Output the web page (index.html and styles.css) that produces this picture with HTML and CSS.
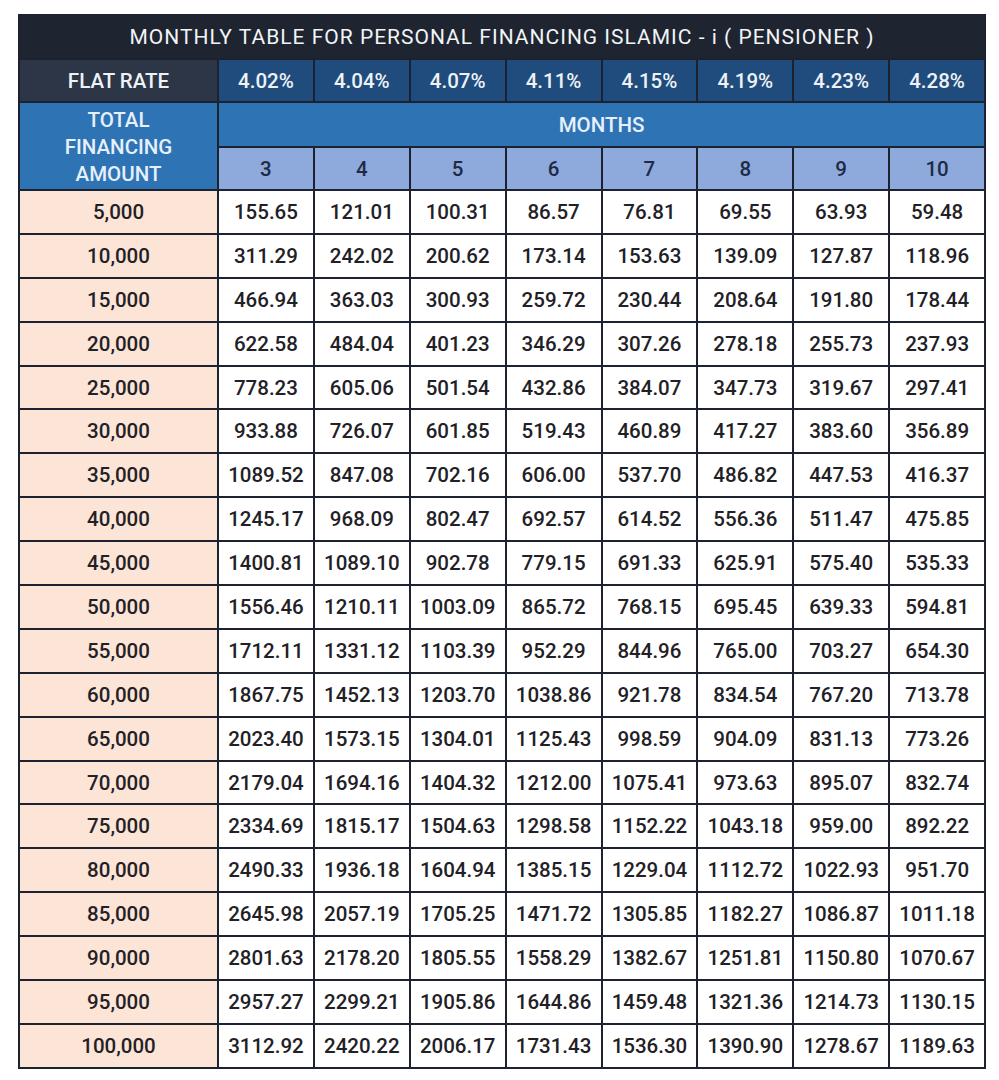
FILE: index.html
```html
<!DOCTYPE html>
<html>
<head>
<meta charset="utf-8">
<link rel="stylesheet" href="styles.css">
</head>
<body>
<table class="rates">
  <colgroup>
    <col class="c-amt">
    <col class="c-m"><col class="c-m"><col class="c-m"><col class="c-m">
    <col class="c-m"><col class="c-m"><col class="c-m"><col class="c-m">
  </colgroup>
  <thead>
    <tr class="r-title"><th colspan="9">MONTHLY TABLE FOR PERSONAL FINANCING ISLAMIC - i ( PENSIONER )</th></tr>
    <tr class="r-rate">
      <th class="lbl">FLAT RATE</th>
      <th>4.02%</th><th>4.04%</th><th>4.07%</th><th>4.11%</th><th>4.15%</th><th>4.19%</th><th>4.23%</th><th>4.28%</th>
    </tr>
    <tr class="r-months">
      <th class="amt-head" rowspan="2">TOTAL<br>FINANCING<br>AMOUNT</th>
      <th colspan="8">MONTHS</th>
    </tr>
    <tr class="r-num">
      <th>3</th><th>4</th><th>5</th><th>6</th><th>7</th><th>8</th><th>9</th><th>10</th>
    </tr>
  </thead>
  <tbody>
    <tr><th>5,000</th><td>155.65</td><td>121.01</td><td>100.31</td><td>86.57</td><td>76.81</td><td>69.55</td><td>63.93</td><td>59.48</td></tr>
    <tr><th>10,000</th><td>311.29</td><td>242.02</td><td>200.62</td><td>173.14</td><td>153.63</td><td>139.09</td><td>127.87</td><td>118.96</td></tr>
    <tr><th>15,000</th><td>466.94</td><td>363.03</td><td>300.93</td><td>259.72</td><td>230.44</td><td>208.64</td><td>191.80</td><td>178.44</td></tr>
    <tr><th>20,000</th><td>622.58</td><td>484.04</td><td>401.23</td><td>346.29</td><td>307.26</td><td>278.18</td><td>255.73</td><td>237.93</td></tr>
    <tr><th>25,000</th><td>778.23</td><td>605.06</td><td>501.54</td><td>432.86</td><td>384.07</td><td>347.73</td><td>319.67</td><td>297.41</td></tr>
    <tr><th>30,000</th><td>933.88</td><td>726.07</td><td>601.85</td><td>519.43</td><td>460.89</td><td>417.27</td><td>383.60</td><td>356.89</td></tr>
    <tr><th>35,000</th><td>1089.52</td><td>847.08</td><td>702.16</td><td>606.00</td><td>537.70</td><td>486.82</td><td>447.53</td><td>416.37</td></tr>
    <tr><th>40,000</th><td>1245.17</td><td>968.09</td><td>802.47</td><td>692.57</td><td>614.52</td><td>556.36</td><td>511.47</td><td>475.85</td></tr>
    <tr><th>45,000</th><td>1400.81</td><td>1089.10</td><td>902.78</td><td>779.15</td><td>691.33</td><td>625.91</td><td>575.40</td><td>535.33</td></tr>
    <tr><th>50,000</th><td>1556.46</td><td>1210.11</td><td>1003.09</td><td>865.72</td><td>768.15</td><td>695.45</td><td>639.33</td><td>594.81</td></tr>
    <tr><th>55,000</th><td>1712.11</td><td>1331.12</td><td>1103.39</td><td>952.29</td><td>844.96</td><td>765.00</td><td>703.27</td><td>654.30</td></tr>
    <tr><th>60,000</th><td>1867.75</td><td>1452.13</td><td>1203.70</td><td>1038.86</td><td>921.78</td><td>834.54</td><td>767.20</td><td>713.78</td></tr>
    <tr><th>65,000</th><td>2023.40</td><td>1573.15</td><td>1304.01</td><td>1125.43</td><td>998.59</td><td>904.09</td><td>831.13</td><td>773.26</td></tr>
    <tr><th>70,000</th><td>2179.04</td><td>1694.16</td><td>1404.32</td><td>1212.00</td><td>1075.41</td><td>973.63</td><td>895.07</td><td>832.74</td></tr>
    <tr><th>75,000</th><td>2334.69</td><td>1815.17</td><td>1504.63</td><td>1298.58</td><td>1152.22</td><td>1043.18</td><td>959.00</td><td>892.22</td></tr>
    <tr><th>80,000</th><td>2490.33</td><td>1936.18</td><td>1604.94</td><td>1385.15</td><td>1229.04</td><td>1112.72</td><td>1022.93</td><td>951.70</td></tr>
    <tr><th>85,000</th><td>2645.98</td><td>2057.19</td><td>1705.25</td><td>1471.72</td><td>1305.85</td><td>1182.27</td><td>1086.87</td><td>1011.18</td></tr>
    <tr><th>90,000</th><td>2801.63</td><td>2178.20</td><td>1805.55</td><td>1558.29</td><td>1382.67</td><td>1251.81</td><td>1150.80</td><td>1070.67</td></tr>
    <tr><th>95,000</th><td>2957.27</td><td>2299.21</td><td>1905.86</td><td>1644.86</td><td>1459.48</td><td>1321.36</td><td>1214.73</td><td>1130.15</td></tr>
    <tr><th>100,000</th><td>3112.92</td><td>2420.22</td><td>2006.17</td><td>1731.43</td><td>1536.30</td><td>1390.90</td><td>1278.67</td><td>1189.63</td></tr>
  </tbody>
</table>
</body>
</html>
```
FILE: styles.css
```css
html, body {
  margin: 0;
  padding: 0;
  background: #ffffff;
}

body {
  padding: 14px 0 0 18px;
  font-family: Roboto, "Liberation Sans", sans-serif;
}

.rates {
  border-collapse: collapse;
  table-layout: fixed;
  width: 966px;
  font-size: 20.5px;
  color: #1f2126;
}

.c-amt { width: 199px; }
.c-m { width: 95.875px; }

.rates th,
.rates td {
  border: 2px solid #1c2230;
  text-align: center;
  vertical-align: middle;
  padding: 0;
  font-weight: 500;
  height: 40px;
}

.rates .r-title th {
  background: #1e2430;
  color: #f2f4f7;
  height: 42px;
  letter-spacing: 1.0px;
  font-size: 21px;
  font-weight: 400;
}

.rates .r-rate th {
  background: #1f4c7c;
  color: #eef2f7;
  height: 41px;
}

.rates .r-rate th.lbl {
  background: #2c3647;
}

.rates .r-months th {
  background: #2e74b5;
  color: #e6f0fa;
  height: 43px;
}

.rates .r-months th.amt-head {
  line-height: 27px;
  padding-top: 2px;
}

.rates .r-num th {
  background: #8eaadc;
  color: #1e2a45;
  height: 41px;
}

.rates tbody th {
  background: #fce4d6;
  height: 41.9px;
}

.rates tbody td {
  background: #ffffff;
  height: 41.9px;
}
```
